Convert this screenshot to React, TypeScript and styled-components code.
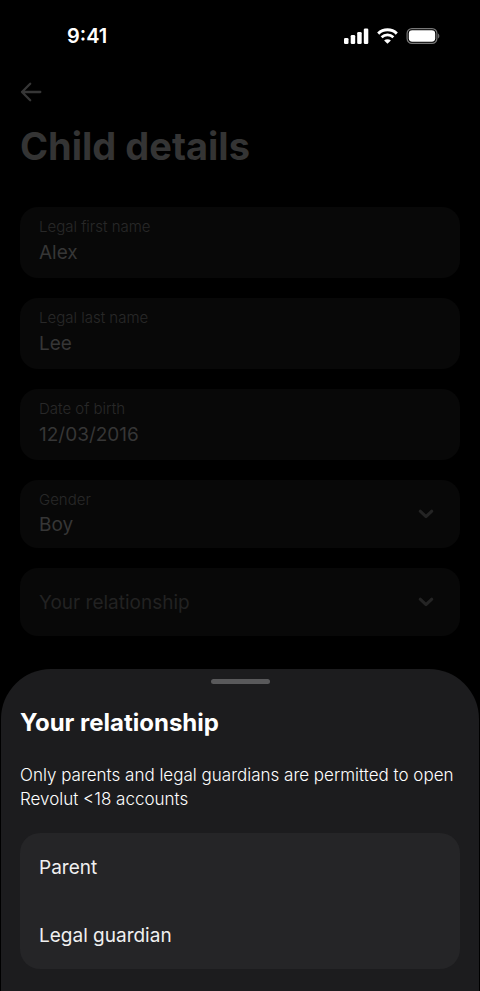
import React from "react";
import styled, { createGlobalStyle } from "styled-components";

const GlobalStyle = createGlobalStyle`
  *, *::before, *::after { box-sizing: border-box; }
  body {
    margin: 0;
    background: #000;
    font-family: Inter, "Liberation Sans", sans-serif;
    -webkit-font-smoothing: antialiased;
  }
  button, input, select { font: inherit; margin: 0; border: 0; background: none; }
`;

const Screen = styled.div`
  display: flex;
  flex-direction: column;
  min-height: 100vh;
  background: #000;
`;

const StatusBar = styled.header`
  display: flex;
  align-items: center;
  justify-content: space-between;
  height: 72px;
  padding: 0 40px 0 67px;
  color: #fff;
`;

const Time = styled.time`
  font-size: 20px;
  line-height: 24px;
  font-weight: 600;
`;

const StatusIcons = styled.div`
  display: flex;
  align-items: center;
  gap: 8px;
`;

const Page = styled.main`
  display: flex;
  flex-direction: column;
  padding: 0 20px 33px;
`;

const BackButton = styled.button`
  display: flex;
  align-items: center;
  width: 40px;
  height: 40px;
  padding: 0;
  color: #363636;
`;

const Title = styled.h1`
  margin: 10px 0 37px;
  font-size: 38px;
  line-height: 48px;
  font-weight: 700;
  color: #343434;
`;

const Form = styled.form`
  display: flex;
  flex-direction: column;
  gap: 20px;
`;

const FieldBox = styled.div<{ $compact?: boolean }>`
  position: relative;
  display: flex;
  flex-direction: column;
  justify-content: center;
  gap: ${({ $compact }) => ($compact ? 1 : 2)}px;
  min-height: ${({ $compact }) => ($compact ? 68 : 71)}px;
  border-radius: 18px;
  padding: ${({ $compact }) => ($compact ? "0 19px" : "0 19px 2px")};
  background: #080808;
`;

const FieldLabel = styled.label`
  font-size: 15px;
  line-height: 20px;
  font-weight: 300;
  color: #282828;
`;

const TextInput = styled.input`
  width: 100%;
  height: 28px;
  padding: 0;
  font-size: 19px;
  font-weight: 400;
  color: #363636;
  outline: none;
`;

const Select = styled.select<{ $empty?: boolean }>`
  appearance: none;
  width: 100%;
  height: 28px;
  padding: 0;
  font-size: 19px;
  font-weight: 400;
  color: ${({ $empty }) => ($empty ? "#222" : "#363636")};
  outline: none;
`;

const SelectIcon = styled.span`
  position: absolute;
  top: 0;
  right: 26px;
  bottom: 0;
  display: flex;
  align-items: center;
  color: #242424;
  pointer-events: none;
`;

const Sheet = styled.section`
  display: flex;
  flex-direction: column;
  flex: 1;
  margin: 0 1px;
  padding: 10px 19px 22px;
  border-radius: 50px 50px 0 0;
  background: #1c1c1e;
  color: #f0f0f0;
`;

const Handle = styled.div`
  align-self: center;
  width: 59px;
  height: 5px;
  border-radius: 3px;
  background: #59595b;
`;

const SheetTitle = styled.h2`
  margin: 23px 0 24px;
  font-size: 24px;
  line-height: 32px;
  font-weight: 700;
  color: #fff;
`;

const Note = styled.p`
  margin: 0 0 22px;
  font-size: 17px;
  line-height: 24px;
  font-weight: 300;
  color: #fff;
`;

const Options = styled.div`
  display: flex;
  flex-direction: column;
  border-radius: 20px;
  background: #252527;
  overflow: hidden;
`;

const Option = styled.button`
  height: 68px;
  padding: 0 19px;
  text-align: left;
  font-size: 19px;
  font-weight: 400;
  color: #f0f0f0;
  cursor: pointer;
`;

function Signal() {
  return (
    <svg width="25" height="16" viewBox="0 0 25 16" fill="currentColor" aria-hidden="true">
      <rect x="0" y="10" width="4.5" height="6" rx="1.3" />
      <rect x="6.7" y="7" width="4.5" height="9" rx="1.3" />
      <rect x="13.2" y="4" width="4.5" height="12" rx="1.3" />
      <rect x="19.8" y="0.5" width="4.5" height="15.5" rx="1.3" />
    </svg>
  );
}

function Wifi() {
  return (
    <svg width="21" height="16" viewBox="0 0 21 16" fill="none" stroke="currentColor" aria-hidden="true">
      <path d="M1.2 5.6C6.4 .6 14.6 .6 19.8 5.6" strokeWidth="3" />
      <path d="M4.6 9.2C8 6.1 13 6.1 16.4 9.2" strokeWidth="2.8" />
      <path d="M10.5 15.8 7.1 12.4C9 10.7 12 10.7 13.9 12.4Z" fill="currentColor" stroke="none" />
    </svg>
  );
}

function Battery() {
  return (
    <svg width="34" height="16" viewBox="0 0 34 16" fill="none" aria-hidden="true">
      <rect x="1.1" y="0.6" width="29.8" height="14.8" rx="4.8" stroke="#777" strokeWidth="1.2" />
      <rect x="2.8" y="2.3" width="26.4" height="11.4" rx="3.4" fill="#fff" />
      <path d="M32.1 5.5c1.6.8 1.6 4.2 0 5Z" fill="#777" />
    </svg>
  );
}

function ArrowLeft() {
  return (
    <svg
      width="22"
      height="20"
      viewBox="0 0 22 20"
      fill="none"
      stroke="currentColor"
      strokeWidth="2.3"
      strokeLinecap="round"
      strokeLinejoin="round"
      aria-hidden="true"
    >
      <path d="M20.3 10H2M10.2 1.7 2 10l8.2 8.3" />
    </svg>
  );
}

function Chevron() {
  return (
    <svg
      width="16"
      height="10"
      viewBox="0 0 16 10"
      fill="none"
      stroke="currentColor"
      strokeWidth="3"
      strokeLinecap="round"
      strokeLinejoin="round"
      aria-hidden="true"
    >
      <path d="M2.2 2.2 8 7.6l5.8-5.4" />
    </svg>
  );
}

function TextField({ id, label, value }: { id: string; label: string; value: string }) {
  return (
    <FieldBox>
      <FieldLabel htmlFor={id}>{label}</FieldLabel>
      <TextInput id={id} type="text" defaultValue={value} />
    </FieldBox>
  );
}

export default function App() {
  return (
    <>
      <GlobalStyle />
      <Screen>
        <StatusBar>
          <Time>9:41</Time>
          <StatusIcons>
            <Signal />
            <Wifi />
            <Battery />
          </StatusIcons>
        </StatusBar>
        <Page>
          <BackButton type="button" aria-label="Back">
            <ArrowLeft />
          </BackButton>
          <Title>Child details</Title>
          <Form>
            <TextField id="first-name" label="Legal first name" value="Alex" />
            <TextField id="last-name" label="Legal last name" value="Lee" />
            <TextField id="birth-date" label="Date of birth" value="12/03/2016" />
            <FieldBox $compact>
              <FieldLabel htmlFor="gender">Gender</FieldLabel>
              <Select id="gender" defaultValue="Boy">
                <option>Boy</option>
                <option>Girl</option>
              </Select>
              <SelectIcon>
                <Chevron />
              </SelectIcon>
            </FieldBox>
            <FieldBox $compact>
              <Select id="relationship" aria-label="Your relationship" defaultValue="" $empty>
                <option value="">Your relationship</option>
                <option>Parent</option>
                <option>Legal guardian</option>
              </Select>
              <SelectIcon>
                <Chevron />
              </SelectIcon>
            </FieldBox>
          </Form>
        </Page>
        <Sheet role="dialog" aria-labelledby="sheet-title">
          <Handle />
          <SheetTitle id="sheet-title">Your relationship</SheetTitle>
          <Note>Only parents and legal guardians are permitted to open Revolut &lt;18 accounts</Note>
          <Options>
            <Option type="button">Parent</Option>
            <Option type="button">Legal guardian</Option>
          </Options>
        </Sheet>
      </Screen>
    </>
  );
}
